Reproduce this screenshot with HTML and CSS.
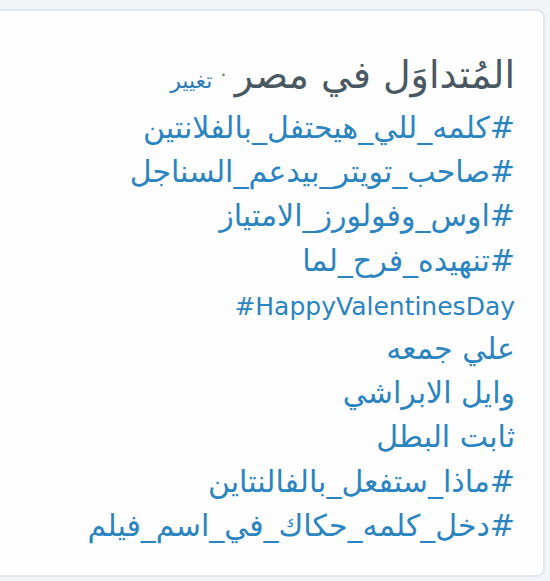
FILE: index.html
```html
<!DOCTYPE html>
<html lang="ar" dir="rtl">
<head>
<meta charset="utf-8">
<link rel="stylesheet" href="styles.css">
</head>
<body>
<div class="page">
  <div class="card">
    <div class="header">
      <h3 class="title">المُتداوَل في مصر</h3>
      <span class="dot">·</span>
      <a class="change" href="#">تغيير</a>
    </div>
    <ul class="trends">
      <li><a href="#">#كلمه_للي_هيحتفل_بالفلانتين</a></li>
      <li><a href="#">#صاحب_تويتر_بيدعم_السناجل</a></li>
      <li><a href="#">#اوس_وفولورز_الامتياز</a></li>
      <li><a href="#">#تنهيده_فرح_لما</a></li>
      <li><a href="#" class="latin" dir="ltr">#HappyValentinesDay</a></li>
      <li><a href="#">علي جمعه</a></li>
      <li><a href="#">وايل الابراشي</a></li>
      <li><a href="#">ثابت البطل</a></li>
      <li><a href="#">#ماذا_ستفعل_بالفالنتاين</a></li>
      <li><a href="#">#دخل_كلمه_حكاك_في_اسم_فيلم</a></li>
    </ul>
  </div>
</div>
</body>
</html>
```
FILE: styles.css
```css
html, body {
  margin: 0;
  padding: 0;
  background: #f3f6f8;
  font-family: "DejaVu Sans", "Noto Sans", sans-serif;
}
.page {
  padding: 9px 5px 0 0;
  height: 581px;
  box-sizing: border-box;
  overflow: hidden;
}
.card {
  background: #fefefe;
  border: 2px solid #e1e8ed;
  border-left: none;
  border-radius: 0 8px 8px 0;
  height: 568px;
  box-sizing: border-box;
  padding: 44px 28px 0 0;
}
.header {
  display: flex;
  align-items: baseline;
  gap: 8px;
  height: 51px;
}
.title {
  margin: 0;
  font-size: 38px;
  line-height: 40px;
  font-weight: normal;
  color: #4a5863;
}
.dot {
  color: #6b7a85;
  font-size: 20px;
  position: relative;
  top: -6px;
}
.change {
  color: #2b7bb9;
  font-size: 22px;
  text-decoration: none;
}
.trends {
  list-style: none;
  margin: 0;
  padding: 0;
}
.trends li {
  height: 44.2px;
  line-height: 44px;
}
.trends a {
  color: #2a84c0;
  font-size: 30px;
  text-decoration: none;
}
.trends a.latin {
  font-size: 25px;
  position: relative;
  top: 2px;
}
```
